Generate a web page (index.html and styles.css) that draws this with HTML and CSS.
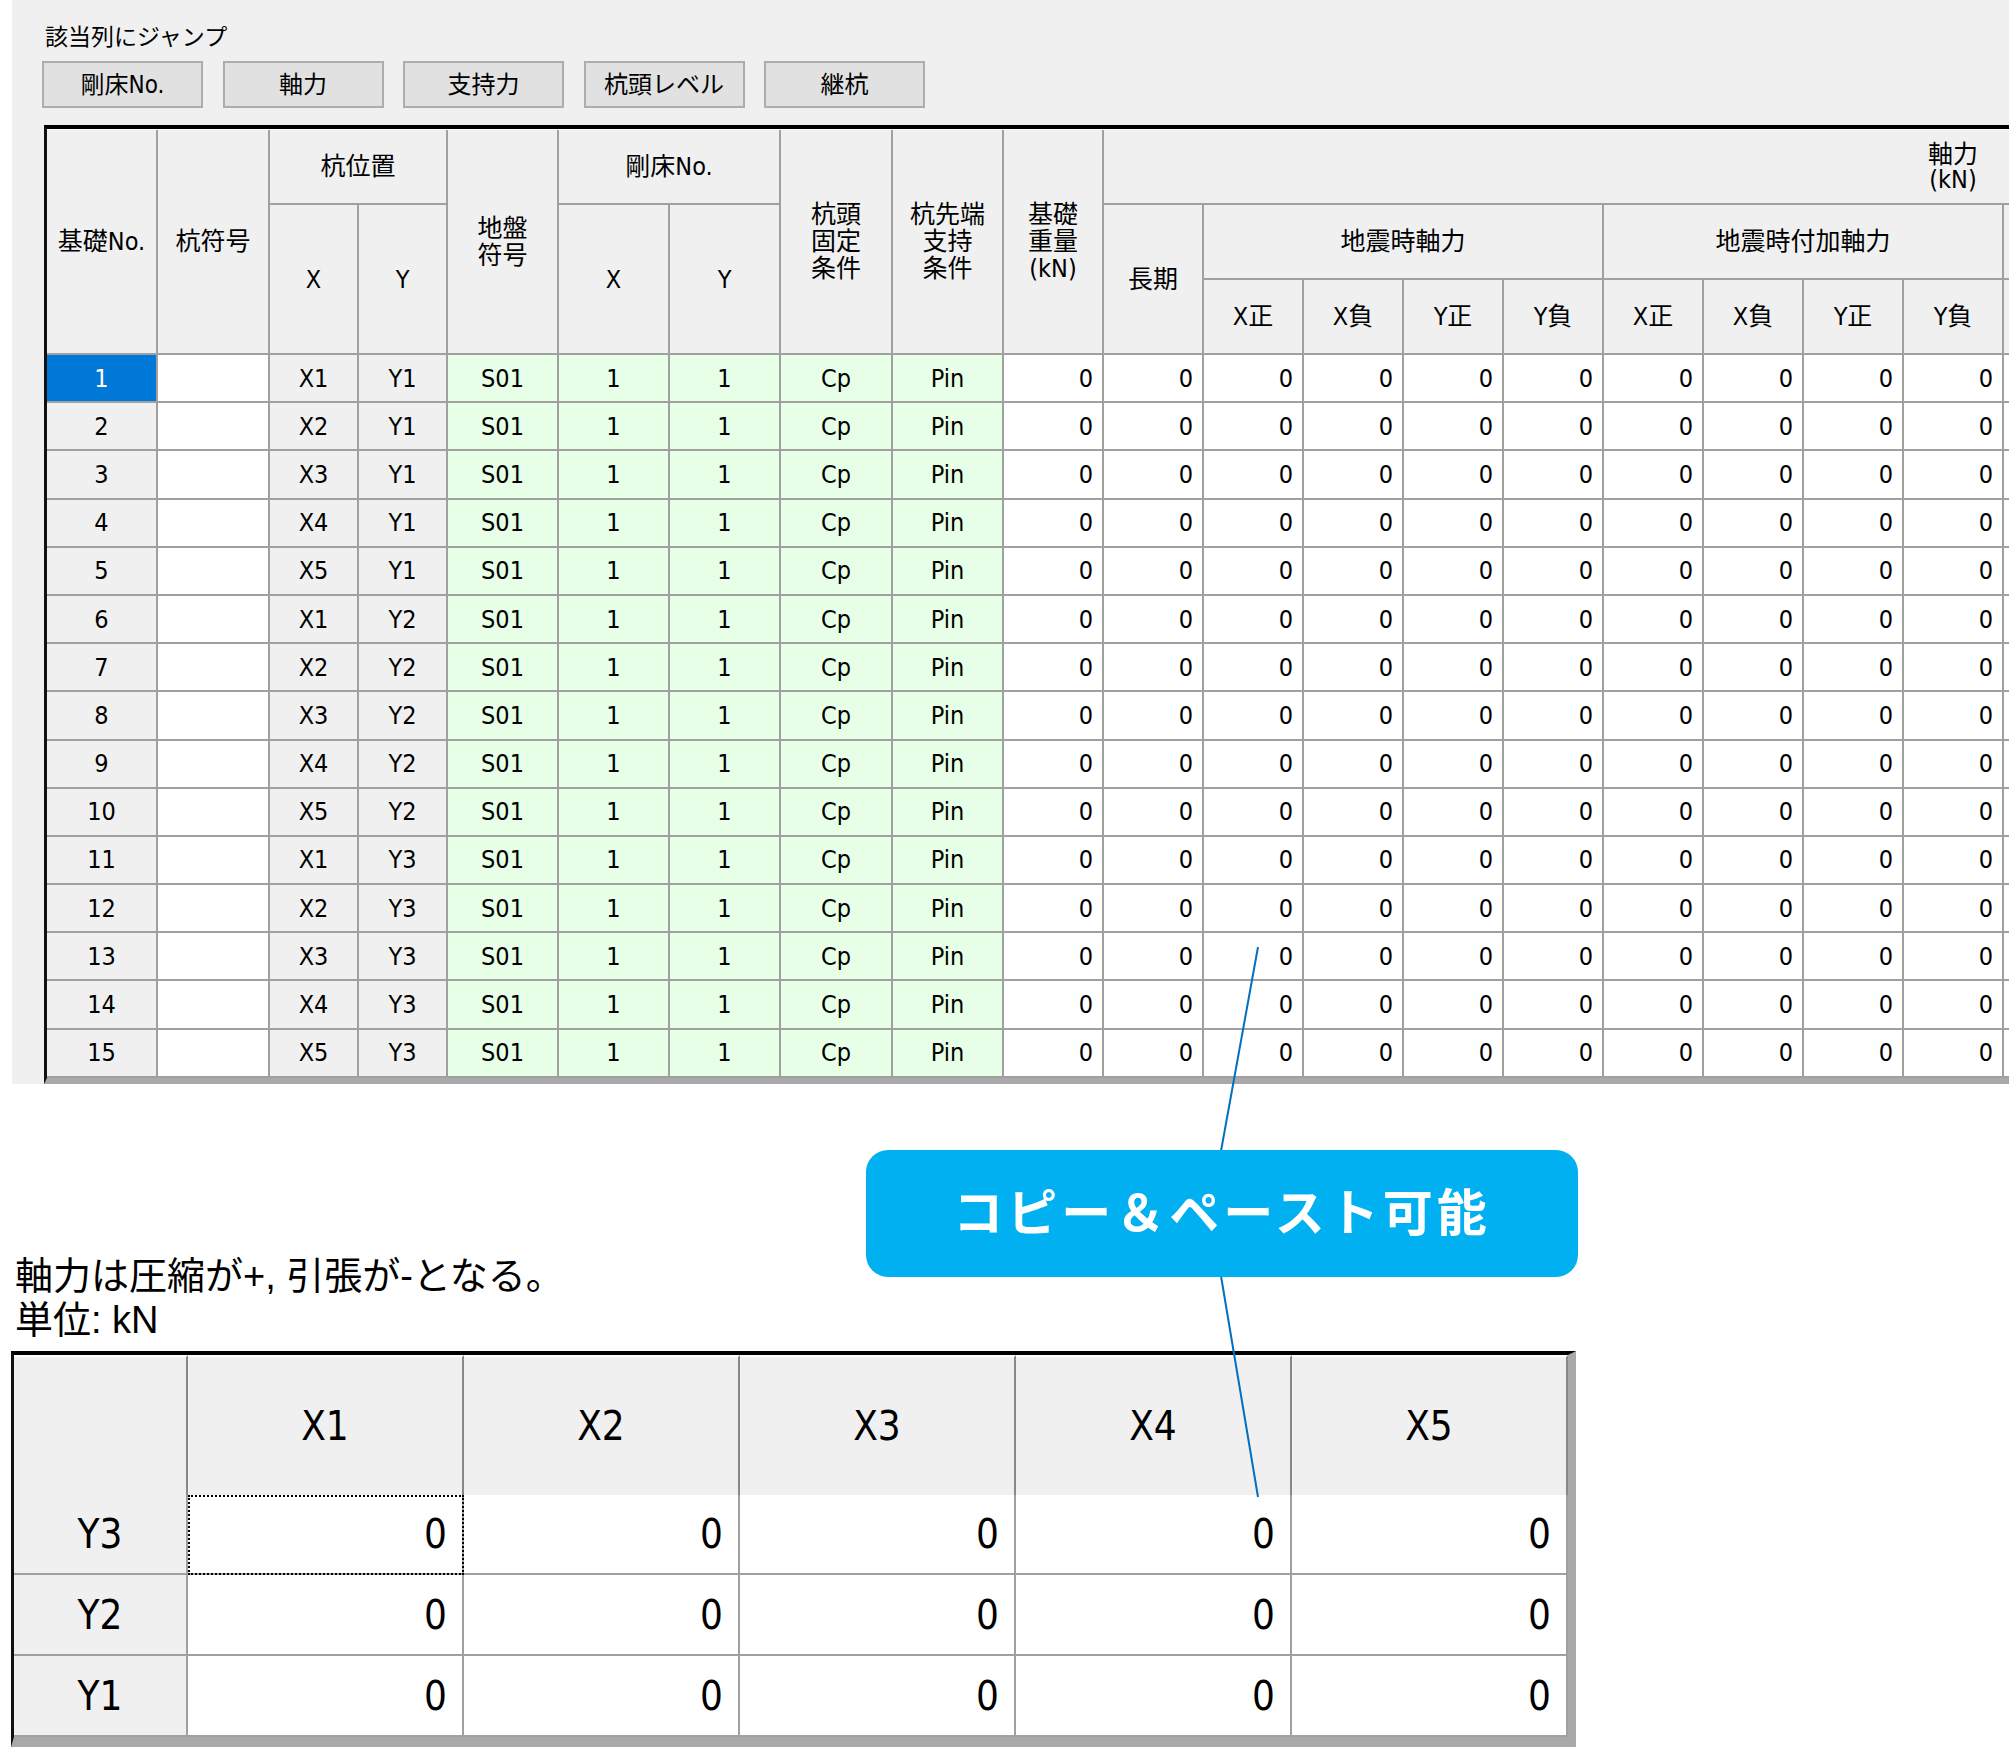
FILE: index.html
```html
<!DOCTYPE html>
<html lang="ja">
<head>
<meta charset="utf-8">
<title>杭データ</title>
<link rel="stylesheet" href="styles.css">
</head>
<body>
<div class="panel">
  <div class="jump-label">該当列にジャンプ</div>
  <div class="buttons">
    <button class="btn">剛床No.</button>
    <button class="btn">軸力</button>
    <button class="btn">支持力</button>
    <button class="btn">杭頭レベル</button>
    <button class="btn">継杭</button>
  </div>
  <div class="grid">
    <div class="h r3">基礎No.</div>
    <div class="h r3">杭符号</div>
    <div class="h c2">杭位置</div>
    <div class="h r3">地盤<br>符号</div>
    <div class="h c2">剛床No.</div>
    <div class="h r3">杭頭<br>固定<br>条件</div>
    <div class="h r3">杭先端<br>支持<br>条件</div>
    <div class="h r3">基礎<br>重量<br>(kN)</div>
    <div class="h c10 axial"><span class="stack">軸力<br>(kN)</span></div>

    <div class="h r2">X</div>
    <div class="h r2">Y</div>
    <div class="h r2">X</div>
    <div class="h r2">Y</div>
    <div class="h r2">長期</div>
    <div class="h c4">地震時軸力</div>
    <div class="h c4">地震時付加軸力</div>
    <div class="h"></div>

    <div class="h">X正</div><div class="h">X負</div><div class="h">Y正</div><div class="h">Y負</div>
    <div class="h">X正</div><div class="h">X負</div><div class="h">Y正</div><div class="h">Y負</div>
    <div class="h"></div>

    <div class="c sel">1</div><div class="c w"></div><div class="c g">X1</div><div class="c g">Y1</div><div class="c gr">S01</div><div class="c gr">1</div><div class="c gr">1</div><div class="c gr">Cp</div><div class="c gr">Pin</div><div class="c n">0</div><div class="c n">0</div><div class="c n">0</div><div class="c n">0</div><div class="c n">0</div><div class="c n">0</div><div class="c n">0</div><div class="c n">0</div><div class="c n">0</div><div class="c n">0</div><div class="c w"></div>
    <div class="c g">2</div><div class="c w"></div><div class="c g">X2</div><div class="c g">Y1</div><div class="c gr">S01</div><div class="c gr">1</div><div class="c gr">1</div><div class="c gr">Cp</div><div class="c gr">Pin</div><div class="c n">0</div><div class="c n">0</div><div class="c n">0</div><div class="c n">0</div><div class="c n">0</div><div class="c n">0</div><div class="c n">0</div><div class="c n">0</div><div class="c n">0</div><div class="c n">0</div><div class="c w"></div>
    <div class="c g">3</div><div class="c w"></div><div class="c g">X3</div><div class="c g">Y1</div><div class="c gr">S01</div><div class="c gr">1</div><div class="c gr">1</div><div class="c gr">Cp</div><div class="c gr">Pin</div><div class="c n">0</div><div class="c n">0</div><div class="c n">0</div><div class="c n">0</div><div class="c n">0</div><div class="c n">0</div><div class="c n">0</div><div class="c n">0</div><div class="c n">0</div><div class="c n">0</div><div class="c w"></div>
    <div class="c g">4</div><div class="c w"></div><div class="c g">X4</div><div class="c g">Y1</div><div class="c gr">S01</div><div class="c gr">1</div><div class="c gr">1</div><div class="c gr">Cp</div><div class="c gr">Pin</div><div class="c n">0</div><div class="c n">0</div><div class="c n">0</div><div class="c n">0</div><div class="c n">0</div><div class="c n">0</div><div class="c n">0</div><div class="c n">0</div><div class="c n">0</div><div class="c n">0</div><div class="c w"></div>
    <div class="c g">5</div><div class="c w"></div><div class="c g">X5</div><div class="c g">Y1</div><div class="c gr">S01</div><div class="c gr">1</div><div class="c gr">1</div><div class="c gr">Cp</div><div class="c gr">Pin</div><div class="c n">0</div><div class="c n">0</div><div class="c n">0</div><div class="c n">0</div><div class="c n">0</div><div class="c n">0</div><div class="c n">0</div><div class="c n">0</div><div class="c n">0</div><div class="c n">0</div><div class="c w"></div>
    <div class="c g">6</div><div class="c w"></div><div class="c g">X1</div><div class="c g">Y2</div><div class="c gr">S01</div><div class="c gr">1</div><div class="c gr">1</div><div class="c gr">Cp</div><div class="c gr">Pin</div><div class="c n">0</div><div class="c n">0</div><div class="c n">0</div><div class="c n">0</div><div class="c n">0</div><div class="c n">0</div><div class="c n">0</div><div class="c n">0</div><div class="c n">0</div><div class="c n">0</div><div class="c w"></div>
    <div class="c g">7</div><div class="c w"></div><div class="c g">X2</div><div class="c g">Y2</div><div class="c gr">S01</div><div class="c gr">1</div><div class="c gr">1</div><div class="c gr">Cp</div><div class="c gr">Pin</div><div class="c n">0</div><div class="c n">0</div><div class="c n">0</div><div class="c n">0</div><div class="c n">0</div><div class="c n">0</div><div class="c n">0</div><div class="c n">0</div><div class="c n">0</div><div class="c n">0</div><div class="c w"></div>
    <div class="c g">8</div><div class="c w"></div><div class="c g">X3</div><div class="c g">Y2</div><div class="c gr">S01</div><div class="c gr">1</div><div class="c gr">1</div><div class="c gr">Cp</div><div class="c gr">Pin</div><div class="c n">0</div><div class="c n">0</div><div class="c n">0</div><div class="c n">0</div><div class="c n">0</div><div class="c n">0</div><div class="c n">0</div><div class="c n">0</div><div class="c n">0</div><div class="c n">0</div><div class="c w"></div>
    <div class="c g">9</div><div class="c w"></div><div class="c g">X4</div><div class="c g">Y2</div><div class="c gr">S01</div><div class="c gr">1</div><div class="c gr">1</div><div class="c gr">Cp</div><div class="c gr">Pin</div><div class="c n">0</div><div class="c n">0</div><div class="c n">0</div><div class="c n">0</div><div class="c n">0</div><div class="c n">0</div><div class="c n">0</div><div class="c n">0</div><div class="c n">0</div><div class="c n">0</div><div class="c w"></div>
    <div class="c g">10</div><div class="c w"></div><div class="c g">X5</div><div class="c g">Y2</div><div class="c gr">S01</div><div class="c gr">1</div><div class="c gr">1</div><div class="c gr">Cp</div><div class="c gr">Pin</div><div class="c n">0</div><div class="c n">0</div><div class="c n">0</div><div class="c n">0</div><div class="c n">0</div><div class="c n">0</div><div class="c n">0</div><div class="c n">0</div><div class="c n">0</div><div class="c n">0</div><div class="c w"></div>
    <div class="c g">11</div><div class="c w"></div><div class="c g">X1</div><div class="c g">Y3</div><div class="c gr">S01</div><div class="c gr">1</div><div class="c gr">1</div><div class="c gr">Cp</div><div class="c gr">Pin</div><div class="c n">0</div><div class="c n">0</div><div class="c n">0</div><div class="c n">0</div><div class="c n">0</div><div class="c n">0</div><div class="c n">0</div><div class="c n">0</div><div class="c n">0</div><div class="c n">0</div><div class="c w"></div>
    <div class="c g">12</div><div class="c w"></div><div class="c g">X2</div><div class="c g">Y3</div><div class="c gr">S01</div><div class="c gr">1</div><div class="c gr">1</div><div class="c gr">Cp</div><div class="c gr">Pin</div><div class="c n">0</div><div class="c n">0</div><div class="c n">0</div><div class="c n">0</div><div class="c n">0</div><div class="c n">0</div><div class="c n">0</div><div class="c n">0</div><div class="c n">0</div><div class="c n">0</div><div class="c w"></div>
    <div class="c g">13</div><div class="c w"></div><div class="c g">X3</div><div class="c g">Y3</div><div class="c gr">S01</div><div class="c gr">1</div><div class="c gr">1</div><div class="c gr">Cp</div><div class="c gr">Pin</div><div class="c n">0</div><div class="c n">0</div><div class="c n">0</div><div class="c n">0</div><div class="c n">0</div><div class="c n">0</div><div class="c n">0</div><div class="c n">0</div><div class="c n">0</div><div class="c n">0</div><div class="c w"></div>
    <div class="c g">14</div><div class="c w"></div><div class="c g">X4</div><div class="c g">Y3</div><div class="c gr">S01</div><div class="c gr">1</div><div class="c gr">1</div><div class="c gr">Cp</div><div class="c gr">Pin</div><div class="c n">0</div><div class="c n">0</div><div class="c n">0</div><div class="c n">0</div><div class="c n">0</div><div class="c n">0</div><div class="c n">0</div><div class="c n">0</div><div class="c n">0</div><div class="c n">0</div><div class="c w"></div>
    <div class="c g">15</div><div class="c w"></div><div class="c g">X5</div><div class="c g">Y3</div><div class="c gr">S01</div><div class="c gr">1</div><div class="c gr">1</div><div class="c gr">Cp</div><div class="c gr">Pin</div><div class="c n">0</div><div class="c n">0</div><div class="c n">0</div><div class="c n">0</div><div class="c n">0</div><div class="c n">0</div><div class="c n">0</div><div class="c n">0</div><div class="c n">0</div><div class="c n">0</div><div class="c w"></div>
  </div>
</div>

<div class="lower">
  <div class="note">軸力は圧縮が+, 引張が-となる。<br>単位: kN</div>
  <div class="grid2">
    <div class="corner"></div>
    <div class="h2">X1</div><div class="h2">X2</div><div class="h2">X3</div><div class="h2">X4</div><div class="h2">X5</div>
    <div class="rh">Y3</div><div class="d2 focus">0</div><div class="d2">0</div><div class="d2">0</div><div class="d2">0</div><div class="d2">0</div>
    <div class="rh">Y2</div><div class="d2">0</div><div class="d2">0</div><div class="d2">0</div><div class="d2">0</div><div class="d2">0</div>
    <div class="rh">Y1</div><div class="d2">0</div><div class="d2">0</div><div class="d2">0</div><div class="d2">0</div><div class="d2">0</div>
  </div>
</div>

<svg class="connector" width="2009" height="1747" viewBox="0 0 2009 1747">
  <line x1="1258" y1="947" x2="1221" y2="1151" stroke="#0070c0" stroke-width="2"/>
  <line x1="1221" y1="1276" x2="1258" y2="1497" stroke="#0070c0" stroke-width="2"/>
</svg>
<div class="callout">コピー＆ペースト可能</div>
</body>
</html>
```
FILE: styles.css
```css
html, body {
  margin: 0;
  padding: 0;
}
body {
  position: relative;
  width: 2009px;
  height: 1747px;
  overflow: hidden;
  background: #ffffff;
  color: #000;
  font-family: "Liberation Sans Narrow", "DejaVu Sans Condensed", "Liberation Sans", "Noto Sans CJK JP", sans-serif;
}

.panel {
  margin-left: 12px;
  height: 1084px;
  box-sizing: border-box;
  padding: 20px 0 0 30px;
  background: #f0f0f0;
  overflow: hidden;
}

.jump-label {
  margin-left: 3px;
  height: 30px;
  font-size: 23px;
  line-height: 30px;
  font-family: "Noto Sans CJK JP", sans-serif;
}

.buttons {
  display: flex;
  gap: 19.5px;
  margin-top: 11px;
}
.btn {
  width: 161px;
  height: 47px;
  box-sizing: border-box;
  border: 2px solid #adadad;
  background: #e1e1e1;
  color: #000;
  padding: 0 0 4px 0;
  font: inherit;
  font-size: 24px;
  display: flex;
  align-items: center;
  justify-content: center;
}

.grid {
  margin-top: 17px;
  margin-left: 2px;
  display: grid;
  grid-template-columns: 111px 112px 89px 89px 111px 111px 111px 112px 111px 100px 100px repeat(8, 100px) 100px;
  grid-template-rows: 75px 75px 75px repeat(15, 48.2px);
  width: max-content;
  border-top: 4px solid #000;
  border-left: 3px solid #111;
  border-bottom: 6px solid #a9a9a9;
  padding-top: 1px;
  background: #ffffff;
}

.h {
  background: #f0f0f0;
  border-right: 2px solid #a0a0a0;
  border-bottom: 2px solid #a0a0a0;
  display: flex;
  align-items: center;
  justify-content: center;
  text-align: center;
  font-size: 25px;
  line-height: 27px;
}
.r2 { grid-row: span 2; }
.r3 { grid-row: span 3; }
.c2 { grid-column: span 2; }
.c4 { grid-column: span 4; }
.c10 { grid-column: span 10; }
.axial {
  justify-content: flex-end;
  padding-right: 126px;
  border-right: none;
}
.stack {
  display: inline-block;
  text-align: center;
  line-height: 25px;
}

.c {
  border-right: 2px solid #a0a0a0;
  border-bottom: 2px solid #a0a0a0;
  display: flex;
  align-items: center;
  justify-content: center;
  font-size: 25px;
  background: #ffffff;
}
.c.g { background: #f0f0f0; }
.c.gr { background: #e6ffe6; }
.c.w { background: #ffffff; }
.c.sel { background: #0078d7; color: #ffffff; }
.c.n {
  justify-content: flex-end;
  padding-right: 9px;
}

.lower {
  padding-top: 170px;
}
.note {
  margin-left: 15px;
  font-family: "Liberation Sans", "Noto Sans CJK JP", sans-serif;
  font-size: 38px;
  line-height: 44px;
}

.grid2 {
  margin-top: 9px;
  margin-left: 11px;
  display: grid;
  grid-template-columns: 174px repeat(5, 276px);
  grid-template-rows: 140px 80px 81px 81px;
  width: max-content;
  border-top: 4px solid #000;
  border-left: 3px solid #111;
  border-right: 8px solid #a9a9a9;
  border-bottom: 10px solid #a9a9a9;
  font-size: 40px;
}
.corner {
  background: #f0f0f0;
  border-right: 2px solid #888888;
  border-top: 2px solid #ffffff;
}
.h2 {
  background: #f0f0f0;
  border-right: 2px solid #888888;
  border-top: 2px solid #ffffff;
  display: flex;
  align-items: center;
  justify-content: center;
}
.rh {
  background: #f0f0f0;
  border-right: 2px solid #a0a0a0;
  border-bottom: 2px solid #a0a0a0;
  display: flex;
  align-items: center;
  justify-content: center;
}
.d2 {
  background: #ffffff;
  border-right: 2px solid #a0a0a0;
  border-bottom: 2px solid #a0a0a0;
  display: flex;
  align-items: center;
  justify-content: flex-end;
  padding-right: 15px;
}
.d2.focus {
  outline: 2px dotted #000;
  outline-offset: -2px;
}

.connector {
  position: absolute;
  left: 0;
  top: 0;
  pointer-events: none;
}
.callout {
  position: absolute;
  left: 866px;
  top: 1150px;
  width: 712px;
  height: 127px;
  box-sizing: border-box;
  padding-bottom: 10px;
  border-radius: 22px;
  background: #00b0f0;
  color: #ffffff;
  display: flex;
  align-items: center;
  justify-content: center;
  font-family: "Noto Sans CJK JP", sans-serif;
  font-weight: 700;
  font-size: 50px;
  letter-spacing: 4px;
}
```
